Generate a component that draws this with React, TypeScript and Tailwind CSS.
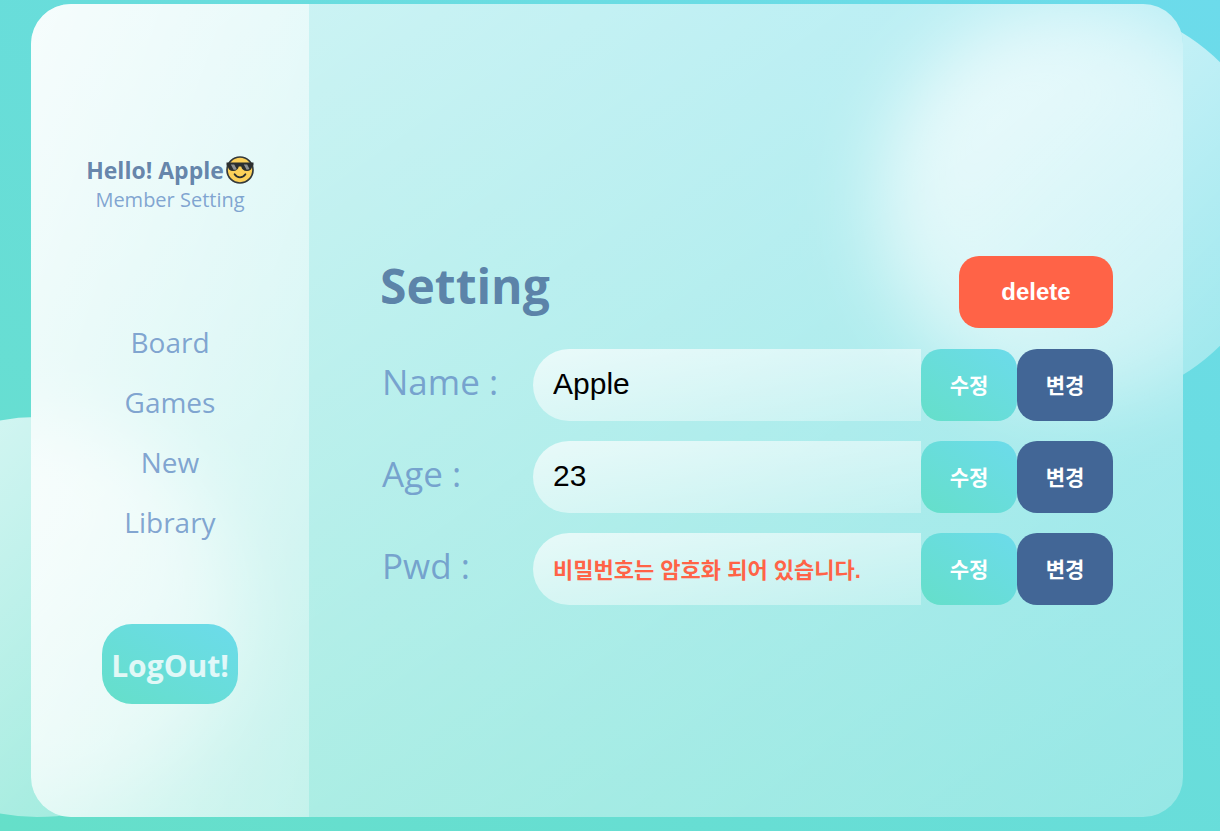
import { useState } from "react";

function CoolFace() {
  return (
    <svg viewBox="0 0 28 28" className="size-7 shrink-0" role="img" aria-label="Smiling face with sunglasses">
      <circle cx="14" cy="14" r="13" fill="#fcd059" stroke="#34393b" strokeWidth="1.7" />
      <path d="M0.5 6.4h27v3h-1.2c-.3 3.6-2.3 5.6-5.4 5.6-3.2 0-5-1.8-5.7-4.6h-2.4C12.1 13.2 10.3 15 7.1 15c-3.1 0-5.1-2-5.4-5.6H.5z" fill="#2b2e2f" />
      <path d="M4.8 8.6h3.4l2.6 4.6c-1 .5-2.100.600-3.200.500zM17.800 8.600h3.400l2.300 4.400c-.8.600-1.900.8-2.900.8z" fill="#8d8f90" />
      <path d="M8.6 18.3c2.6 4 8.2 4 10.8 0" fill="none" stroke="#2b2e2f" strokeWidth="1.8" strokeLinecap="round" />
    </svg>
  );
}

function Circles({ soft = false }: { soft?: boolean }) {
  const blur = soft ? "blur-[40px]" : "";
  return (
    <>
      <div className={`absolute top-1 -right-[59px] size-[400px] rounded-full bg-linear-to-br from-white/80 to-white/30 ${blur}`} />
      <div className={`absolute bottom-[14px] -left-[163px] size-[400px] rounded-full bg-linear-to-br from-white/80 to-white/30 ${blur}`} />
    </>
  );
}

const links = ["Board", "Games", "New", "Library"];

type Field = { id: string; label: string; value: string; placeholder?: string };

const fields: Field[] = [
  { id: "name", label: "Name :", value: "Apple" },
  { id: "age", label: "Age :", value: "23" },
  { id: "pwd", label: "Pwd :", value: "", placeholder: "비밀번호는 암호화 되어 있습니다." },
];

function FieldRow({ field }: { field: Field }) {
  const [value, setValue] = useState(field.value);
  return (
    <div className="flex h-[72px] items-stretch">
      <label
        htmlFor={field.id}
        className="w-[153px] shrink-0 pl-[2px] pt-2 text-[35px] leading-[50px] text-[#658ec6]/80"
      >
        {field.label}
      </label>
      <input
        id={field.id}
        value={value}
        placeholder={field.placeholder}
        onChange={(e) => setValue(e.target.value)}
        className="min-w-0 flex-1 rounded-l-[40px] bg-linear-to-br from-white/70 to-white/30 px-5 pb-1 font-['Liberation_Sans','Noto_Sans_CJK_KR',sans-serif] text-[30px] text-black outline-none placeholder:text-[22px] placeholder:font-bold placeholder:text-[#ff6347]"
      />
      <button
        type="button"
        className="w-24 shrink-0 rounded-[20px] bg-linear-to-tr from-[#65dfc9] to-[#6cdbeb] font-['Noto_Sans_CJK_KR',sans-serif] text-[21px] font-bold text-white"
      >
        수정
      </button>
      <button
        type="button"
        className="w-24 shrink-0 rounded-[20px] bg-[#426696] font-['Noto_Sans_CJK_KR',sans-serif] text-[21px] font-bold text-white"
      >
        변경
      </button>
    </div>
  );
}

export default function App() {
  return (
    <div className="relative flex min-h-screen overflow-hidden bg-linear-to-tr from-[#65dfc9] to-[#6cdbeb] pt-1 pr-[37px] pb-[14px] pl-[31px] font-['Open_Sans','Noto_Sans_CJK_KR',sans-serif]">
      <Circles />

      <main className="relative isolate flex flex-1 overflow-hidden rounded-[40px]">
        <div className="absolute -top-1 -right-[37px] -bottom-[14px] -left-[31px] -z-10 bg-linear-to-tr from-[#65dfc9] to-[#6cdbeb]">
          <Circles soft />
        </div>
        <div className="flex min-w-0 flex-1 bg-linear-to-br from-white/70 to-white/30">
          <aside className="flex w-[278px] shrink-0 flex-col items-center bg-linear-to-br from-white/80 to-white/30 pt-[150px]">
            <div className="flex flex-col items-center">
              <h2 className="flex items-center gap-[2px] text-[23px] leading-8 font-bold text-[#426696]/80">
                Hello! Apple
                <CoolFace />
              </h2>
              <p className="text-xl leading-7 text-[#658ec6]/80">Member Setting</p>
            </div>
            <nav className="mt-[98px] flex flex-col items-center">
              {links.map((l) => (
                <a key={l} href="#" className="text-[28px] leading-[60px] text-[#658ec6]/80">
                  {l}
                </a>
              ))}
            </nav>
            <button
              type="button"
              className="mt-[72px] h-20 w-[136px] rounded-[30px] bg-linear-to-tr from-[#65dfc9] to-[#6cdbeb] pt-[2px] text-[30px] font-bold text-white/80"
            >
              LogOut!
            </button>
          </aside>

          <section className="flex min-w-0 flex-1 flex-col justify-center gap-5 pt-10 pr-[70px] pl-[71px]">
            <div className="flex h-[73px] items-start justify-between">
              <h1 className="text-[48px] leading-[60px] font-bold text-[#426696]/80">Setting</h1>
              <button
                type="button"
                className="h-[72px] w-[154px] rounded-[20px] bg-[#ff6347] font-['Liberation_Sans',sans-serif] text-2xl font-bold text-white"
              >
                delete
              </button>
            </div>
            {fields.map((f) => (
              <FieldRow key={f.id} field={f} />
            ))}
          </section>
        </div>
      </main>
    </div>
  );
}
